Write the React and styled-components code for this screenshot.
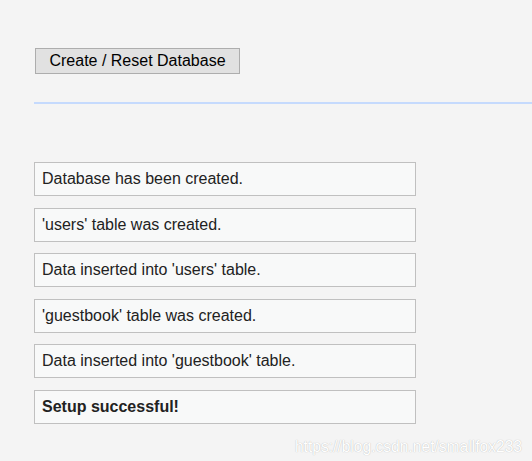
import React from 'react'
import styled, { createGlobalStyle } from 'styled-components'

const GlobalStyle = createGlobalStyle`
	html, body {
		margin: 0;
		padding: 0;
		background: #f4f4f4;
		font-family: "Liberation Sans", Arial, sans-serif;
	}
`

const Page = styled.div`
	position: relative;
	min-height: 461px;
	padding: 48px 0 0 34px;
	box-sizing: border-box;
	overflow: hidden;
`

const Button = styled.button`
	display: block;
	margin-left: 1px;
	width: 205px;
	height: 26px;
	padding: 0;
	font-family: "Liberation Sans", Arial, sans-serif;
	font-size: 16px;
	color: #000;
	background: #e1e1e1;
	border: 1px solid #adadad;
	border-radius: 0;
`

const Divider = styled.div`
	margin-top: 28px;
	height: 2px;
	background: #c5dafd;
`

const List = styled.div`
	display: flex;
	flex-direction: column;
	gap: 11.5px;
	width: 382px;
	margin-top: 58px;
`

const Message = styled.div`
	height: 34px;
	box-sizing: border-box;
	display: flex;
	align-items: center;
	padding: 0 7px;
	background: #f8f9f9;
	border: 1px solid #c0c0c0;
	font-size: 16px;
	color: #222;
	font-weight: ${p => (p.$bold ? 'bold' : 'normal')};
`

const Watermark = styled.div`
	position: absolute;
	right: 10px;
	bottom: 5px;
	font-size: 15.6px;
	color: #fff;
	text-shadow: 0 0 1px rgba(0, 0, 0, 0.3);
`

const messages = [
	'Database has been created.',
	"'users' table was created.",
	"Data inserted into 'users' table.",
	"'guestbook' table was created.",
	"Data inserted into 'guestbook' table."
]

const App = () => {
	return (
		<>
			<GlobalStyle />
			<Page>
				<Button type="button">Create / Reset Database</Button>
				<Divider />
				<List>
					{messages.map(m => (
						<Message key={m}>{m}</Message>
					))}
					<Message $bold>Setup successful!</Message>
				</List>
				<Watermark>https://blog.csdn.net/smallfox233</Watermark>
			</Page>
		</>
	)
}

export default App
